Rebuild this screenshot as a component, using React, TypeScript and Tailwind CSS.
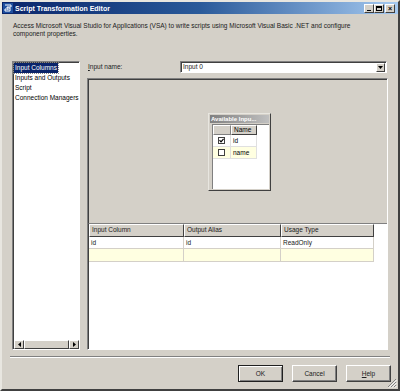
import React from "react";

const font = { fontFamily: '"Liberation Sans", Arial, sans-serif' };

function TitleBtn({ children }: { children: React.ReactNode }) {
  return (
    <div className="w-[10px] h-[9px] bg-[#d4d0c8] border border-t-white border-l-white border-r-[#404040] border-b-[#404040] flex items-center justify-center">
      {children}
    </div>
  );
}

function Btn({ label, def }: { label: React.ReactNode; def?: boolean }) {
  return (
    <div
      className={
        "w-[45px] h-[17px] flex items-center justify-center text-[6.5px] text-[#202020] bg-[#d4d0c8] border " +
        (def
          ? "border-[#202020] shadow-[inset_1px_1px_0_#fff,inset_-1px_-1px_0_#808080]"
          : "border-t-white border-l-white border-r-[#404040] border-b-[#404040] shadow-[inset_-1px_-1px_0_#808080]")
      }
    >
      {label}
    </div>
  );
}

export default function App() {
  return (
    <div
      className="relative w-[400px] h-[391px] bg-[#d4d0c8] border-2 border-t-[#e8e6e0] border-l-[#e8e6e0] border-r-[#404040] border-b-[#404040] flex flex-col overflow-hidden"
      style={font}
    >
      {/* Title bar */}
      <div className="h-[12px] flex items-center bg-gradient-to-r from-[#0a246a] via-[#2a5a9a] to-[#a6caf0] pl-[1px] pr-[3px]">
        <svg width="10" height="10" viewBox="0 0 10 10" className="mr-[2px]">
          <rect x="0" y="0" width="10" height="10" fill="#1e4fa0" />
          <path d="M2 2 L8 2 L8 4 L4 4 L4 5 L7 5 L7 8 L2 8 L2 6 L5 6 L5 7" fill="none" stroke="#fff" strokeWidth="1" />
        </svg>
        <span className="text-white font-bold text-[7px] leading-none">Script Transformation Editor</span>
        <div className="ml-auto flex items-center">
          <TitleBtn>
            <div className="w-[4px] h-[1px] bg-black mt-[4px]" />
          </TitleBtn>
          <TitleBtn>
            <div className="w-[6px] h-[5px] border border-black border-t-2" />
          </TitleBtn>
          <div className="w-[1px]" />
          <TitleBtn>
            <span className="text-[7px] leading-none font-bold text-black">×</span>
          </TitleBtn>
        </div>
      </div>

      {/* Description */}
      <div className="pl-[11px] pt-[8px] text-[6.5px] leading-[8px] text-[#202020] h-[47px]">
        <div>Access Microsoft Visual Studio for Applications (VSA) to write scripts using Microsoft Visual Basic .NET and configure</div>
        <div>component properties.</div>
      </div>

      {/* Main */}
      <div className="flex h-[289px]">
        {/* Left list */}
        <div className="ml-[10px] w-[68px] h-[289px] bg-white border border-t-[#808080] border-l-[#808080] border-r-white border-b-white shadow-[inset_1px_1px_0_#404040] flex flex-col text-[6.5px] text-black overflow-hidden">
          <div className="pl-[1px] pt-[1px] flex flex-col whitespace-nowrap">
            <div className="h-[10px] leading-[10px] flex">
              <span className="bg-[#0a246a] text-white px-[1px] outline-1 outline-dotted outline-[#888]">Input Columns</span>
            </div>
            <div className="h-[10px] leading-[10px] px-[1px]">Inputs and Outputs</div>
            <div className="h-[10px] leading-[10px] px-[1px]">Script</div>
            <div className="h-[10px] leading-[10px] px-[1px]">Connection Managers</div>
          </div>
          <div className="mt-auto h-[9px] flex bg-[#ece9e3] ml-[1px]">
            <div className="w-[10px] h-[9px] bg-[#d4d0c8] border border-t-white border-l-white border-r-[#404040] border-b-[#404040] flex items-center justify-center">
              <svg width="3" height="5" viewBox="0 0 3 5"><path d="M3 0 L0 2.5 L3 5 Z" fill="#000" /></svg>
            </div>
            <div className="flex-1 h-[9px] bg-[#d4d0c8] border border-t-white border-l-white border-r-[#404040] border-b-[#404040]" />
            <div className="w-[10px] h-[9px] bg-[#d4d0c8] border border-t-white border-l-white border-r-[#404040] border-b-[#404040] flex items-center justify-center">
              <svg width="3" height="5" viewBox="0 0 3 5"><path d="M0 0 L3 2.5 L0 5 Z" fill="#000" /></svg>
            </div>
          </div>
        </div>

        {/* Right column */}
        <div className="ml-[7px] w-[301px] flex flex-col">
          <div className="h-[12px] flex items-center text-[6.5px] text-[#202020]">
            <span className="w-[93px] pl-[1px]">
              <span className="underline">I</span>nput name:
            </span>
            <div className="w-[207px] h-[12px] bg-white border border-t-[#808080] border-l-[#808080] border-r-white border-b-white shadow-[inset_1px_1px_0_#404040] flex items-center">
              <span className="pl-[2px] flex-1">Input 0</span>
              <div className="w-[9px] h-[9px] mr-[1px] bg-[#d4d0c8] border border-t-white border-l-white border-r-[#404040] border-b-[#404040] flex items-center justify-center">
                <svg width="5" height="3" viewBox="0 0 5 3"><path d="M0 0 L5 0 L2.5 3 Z" fill="#000" /></svg>
              </div>
            </div>
          </div>

          {/* Panel */}
          <div className="mt-[5px] h-[272px] border border-t-[#808080] border-l-[#808080] border-r-white border-b-white flex flex-col">
            {/* Diagram area */}
            <div className="relative h-[144px] bg-[#d4d0c8] border-l border-t border-[#404040]">
              <div className="absolute left-[119px] top-[33px] w-[63px] h-[78px] bg-[#d4d0c8] border border-t-[#e8e6e0] border-l-[#e8e6e0] border-r-[#404040] border-b-[#404040] flex flex-col p-[1px]">
                <div className="h-[8px] bg-gradient-to-r from-[#808080] to-[#c0c0c0] text-white font-bold text-[6px] leading-[8px] pl-[1px] whitespace-nowrap overflow-hidden">
                  Available Inpu...
                </div>
                <div className="flex-1 bg-white ml-[2px] mt-[1px] border-l border-t border-[#808080] text-[6.5px] text-black">
                  <div className="flex h-[10px]">
                    <div className="w-[18px] bg-[#d4d0c8] border-r border-b border-[#808080] border-t border-l border-t-white border-l-white" />
                    <div className="w-[26px] bg-[#d4d0c8] border-r border-b border-[#404040] border-t border-l border-t-white border-l-white leading-[8px] pl-[2px]">Name</div>
                  </div>
                  <div className="flex h-[12px] items-center">
                    <div className="w-[18px] h-[12px] flex items-center justify-center border-r border-b border-[#e0e0e0]">
                      <div className="w-[7px] h-[7px] bg-white border border-[#404040] flex items-center justify-center">
                        <svg width="5" height="5" viewBox="0 0 5 5"><path d="M0.5 2.2 L2 3.8 L4.6 0.8" fill="none" stroke="#000" strokeWidth="1.2" /></svg>
                      </div>
                    </div>
                    <div className="w-[26px] h-[12px] leading-[12px] pl-[2px] border-r border-b border-[#e0e0e0]">id</div>
                  </div>
                  <div className="flex h-[12px] items-center bg-[#ffffe1] w-[44px]">
                    <div className="w-[18px] h-[12px] flex items-center justify-center border-r border-b border-[#e0e0e0]">
                      <div className="w-[7px] h-[7px] bg-white border border-[#404040]" />
                    </div>
                    <div className="w-[26px] h-[12px] leading-[12px] pl-[2px] border-r border-b border-[#e0e0e0]">name</div>
                  </div>
                </div>
              </div>
            </div>
            {/* Grid area */}
            <div className="flex-1 bg-white border-l border-t border-l-[#404040] border-t-[#808080] text-[6.5px] text-[#202020]">
              <div className="flex h-[13px]">
                <div className="w-[95px] bg-[#d4d0c8] border border-t-white border-l-white border-r-[#404040] border-b-[#404040] leading-[10px] pl-[2px]">Input Column</div>
                <div className="w-[97px] bg-[#d4d0c8] border border-t-white border-l-white border-r-[#404040] border-b-[#404040] leading-[10px] pl-[2px]">Output Alias</div>
                <div className="w-[93px] bg-[#d4d0c8] border border-t-white border-l-white border-r-[#404040] border-b-[#404040] leading-[10px] pl-[2px]">Usage Type</div>
              </div>
              <div className="flex h-[12px] w-[285px]">
                <div className="w-[95px] border-r border-b border-[#d4d0c8] leading-[11px] pl-[2px]">id</div>
                <div className="w-[97px] border-r border-b border-[#d4d0c8] leading-[11px] pl-[2px]">id</div>
                <div className="w-[93px] border-r border-b border-[#d4d0c8] leading-[11px] pl-[2px]">ReadOnly</div>
              </div>
              <div className="flex h-[13px] w-[285px] bg-[#ffffe1]">
                <div className="w-[95px] border-r border-b border-[#d4d0c8]" />
                <div className="w-[97px] border-r border-b border-[#d4d0c8]" />
                <div className="w-[93px] border-r border-b border-[#d4d0c8]" />
              </div>
            </div>
          </div>
        </div>
      </div>

      {/* Separator */}
      <div className="mt-[6px] mx-[8px] h-[2px] border-t border-b border-t-[#808080] border-b-white" />

      {/* Buttons */}
      <div className="mt-[7px] flex justify-end pr-[7px] gap-[9px]">
        <Btn label="OK" def />
        <Btn label="Cancel" />
        <Btn label={<span><span className="underline">H</span>elp</span>} />
      </div>

      {/* Resize grip */}
      <svg className="absolute right-[1px] bottom-[1px]" width="10" height="10" viewBox="0 0 10 10">
        <path d="M9 1 L1 9 M9 4 L4 9 M9 7 L7 9" stroke="#808080" strokeWidth="1" />
        <path d="M9.8 1.8 L1.8 9.8 M9.8 4.8 L4.8 9.8 M9.8 7.8 L7.8 9.8" stroke="#fff" strokeWidth="1" />
      </svg>
    </div>
  );
}
